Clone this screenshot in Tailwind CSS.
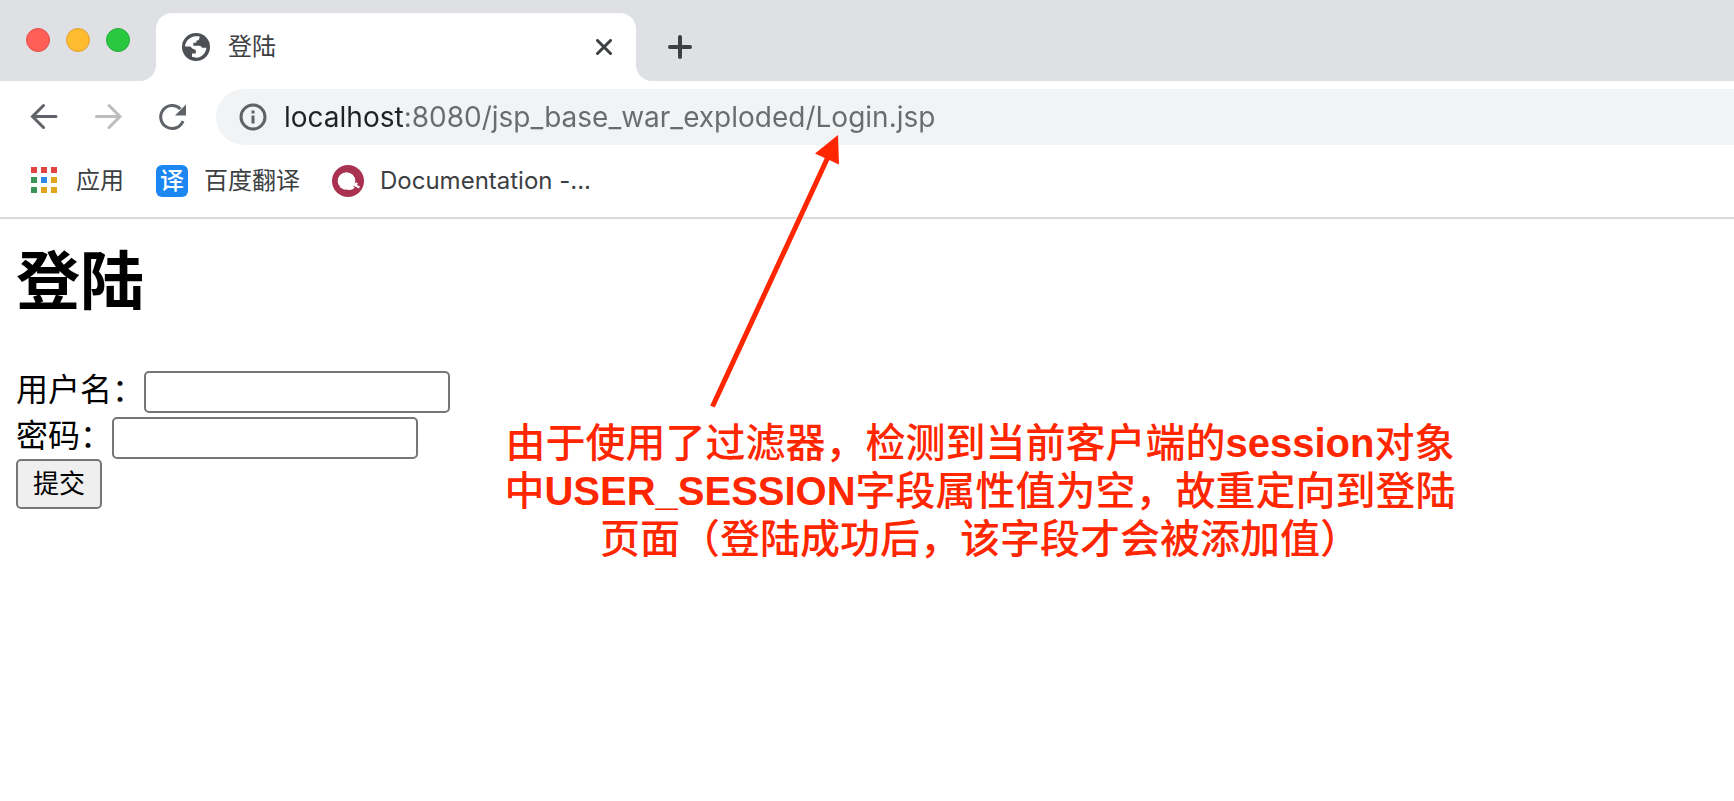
<!DOCTYPE html>
<html lang="zh-CN">
<head>
    <meta charset="UTF-8">
    <meta name="viewport" content="width=device-width, initial-scale=1.0">
    <title>登陆</title>
    <script src="https://cdn.jsdelivr.net/npm/@tailwindcss/browser@4"></script>
</head>
<body class="relative min-h-screen bg-white font-['Inter','Noto_Sans_CJK_SC',sans-serif]">

<!-- Tab strip -->
<header class="flex h-[81px]">
    <div class="flex shrink-0 items-start gap-4 w-[156px] pl-[26px] pt-7 bg-[#dee0e4] rounded-br-2xl">
        <button aria-label="关闭窗口" class="size-6 rounded-full bg-[#ff5f57] border border-[#e2504a]"></button>
        <button aria-label="最小化" class="size-6 rounded-full bg-[#febc2e] border border-[#dfa032]"></button>
        <button aria-label="全屏" class="size-6 rounded-full bg-[#28c840] border border-[#24ac38]"></button>
    </div>
    <div class="shrink-0 w-[480px] pt-[13px] bg-[#dee0e4]">
        <div class="flex items-center h-[68px] px-6 bg-white rounded-t-2xl">
            <svg class="size-8 shrink-0" viewBox="0 0 32 32">
                <circle cx="16" cy="16" r="14" fill="#4d5155"/>
                <path d="M5 15.500C5.500 10 9.500 6 15 5.200h4.500v1.300c0 2-1.300 3.300-3.200 3.300v2h-3v2.900h6c1.500 0 2.200.8 2.700 2h4.500c-.5 5-4.500 9.500-10 10l-4.500-.9v-3.300h3.800v-3.500l-3.500-1.500-2-2z" fill="#fff"/>
            </svg>
            <span class="ml-4 text-2xl text-[#3c4043]">登陆</span>
            <button aria-label="关闭标签页" class="ml-auto">
                <svg class="size-4" viewBox="0 0 16 16" stroke="#3c4043" stroke-width="3" stroke-linecap="round"><path d="M1.500 1.500 14.500 14.500M14.500 1.500 1.500 14.500"/></svg>
            </button>
        </div>
    </div>
    <div class="flex-1 flex items-center pt-[13px] pl-8 bg-[#dee0e4] rounded-bl-2xl">
        <button aria-label="新标签页">
            <svg class="size-6" viewBox="0 0 24 24" stroke="#3c4043" stroke-width="4" stroke-linecap="round"><path d="M12 2v20M2 12h20"/></svg>
        </button>
    </div>
</header>

<!-- Toolbar -->
<nav class="flex items-center pt-2 pl-7">
    <button aria-label="后退" class="mr-8">
        <svg class="size-8" viewBox="0 0 32 32" fill="none" stroke="#5f6368" stroke-width="3" stroke-linecap="round"><path d="M28 15.500H4.500M15.500 4.500 4.500 15.500l11 11"/></svg>
    </button>
    <button aria-label="前进" class="mr-8" disabled>
        <svg class="size-8" viewBox="0 0 32 32" fill="none" stroke="#bbbcbe" stroke-width="3" stroke-linecap="round"><path d="M4.500 15.500H28M17 4.500l11 11-11 11"/></svg>
    </button>
    <button aria-label="重新加载" class="mr-7">
        <svg class="size-8" viewBox="0 0 32 32" fill="none"><path d="M27 20A11.500 11.500 0 1 1 24.500 8" stroke="#5f6368" stroke-width="3"/><path d="M30 3.500v11H19z" fill="#5f6368"/></svg>
    </button>
    <div class="flex-1 flex items-center h-14 pl-[23px] bg-[#f1f3f5] rounded-l-full">
        <svg class="size-7 shrink-0" viewBox="0 0 28 28" fill="none" stroke="#5f6368" stroke-width="3"><circle cx="14" cy="14" r="12"/><path d="M14 12.500v8M14 7.500v3"/></svg>
        <input type="text" aria-label="地址" value="localhost:8080/jsp_base_war_exploded/Login.jsp" class="flex-1 ml-[17px] text-[28px] leading-10 text-transparent bg-clip-text bg-[linear-gradient(to_right,#202124_121px,#696b6f_121px)] outline-none">
    </div>
</nav>

<!-- Bookmarks -->
<nav class="flex items-center h-[74px] pl-7 text-2xl text-[#3c4043] border-b-2 border-[#d9dadc]">
    <a href="#" class="flex items-center mr-8">
        <svg class="size-8 mr-4" viewBox="0 0 32 32">
            <path d="M3 2h6v6H3zM13 2h6v6h-6zM23 2h6v6h-6z" fill="#e04440"/>
            <path d="M3 12h6v6H3zM3 22h6v6H3z" fill="#3a9557"/>
            <path d="M13 12h6v6h-6z" fill="#2f86e4"/>
            <path d="M23 12h6v6h-6zM13 22h6v6h-6zM23 22h6v6h-6z" fill="#e2a51c"/>
        </svg>
        应用
    </a>
    <a href="#" class="flex items-center mr-8">
        <span class="flex items-center justify-center size-8 mr-4 rounded-md bg-[#1c87f2] text-white font-medium">译</span>
        百度翻译
    </a>
    <a href="#" class="flex items-center">
        <svg class="size-8 mr-4" viewBox="0 0 32 32">
            <circle cx="16" cy="16" r="16" fill="#a83250"/>
            <circle cx="14.500" cy="16" r="8.800" fill="#fff"/>
            <path d="M16 24c3 .3 4.500-.3 6-2" stroke="#fff" stroke-width="2" fill="none"/>
            <path d="M21.500 20.500 25 18l-1.500 2.500 4 2" stroke="#fff" stroke-width="2" fill="none"/>
        </svg>
        Documentation -...
    </a>
</nav>

<main class="px-4 pt-[15px] text-black">
    <h1 class="mb-11 text-[64px] leading-[93px] font-bold">登陆</h1>
    <form class="text-[32px] leading-[38px]">
        <div class="flex items-center mb-1">
            <label for="username" class="pb-1">用户名：</label>
            <input id="username" name="username" type="text" class="w-[306px] h-[42px] px-1 border-2 border-[#767676] rounded-[5px] bg-white">
        </div>
        <div class="flex items-center">
            <label for="password" class="pb-1">密码：</label>
            <input id="password" name="password" type="password" class="w-[306px] h-[42px] px-1 border-2 border-[#767676] rounded-[5px] bg-white">
        </div>
        <button type="submit" class="block w-[86px] h-[50px] border-2 border-[#767676] rounded-[5px] bg-[#efefef] text-[26px] leading-10">提交</button>
    </form>
</main>

<!-- Red note and arrow drawn over the page -->
<svg class="absolute left-[700px] top-[130px] w-[150px] h-[280px] pointer-events-none" viewBox="0 0 150 280">
    <path d="M12.500 276.500 128 27" stroke="#ff2600" stroke-width="5"/>
    <path d="M138 5 115 23.500 139 34.500z" fill="#ff2600"/>
</svg>
<p class="absolute left-[480px] top-[419px] w-[1000px] text-center text-[40px] leading-12 font-medium text-[#ff2600] font-['Liberation_Sans','Noto_Sans_CJK_SC',sans-serif]">
    由于使用了过滤器，检测到当前客户端的<b class="font-bold">session</b>对象<br>
    中<b class="font-bold">USER_SESSION</b>字段属性值为空，故重定向到登陆<br>
    页面（登陆成功后，该字段才会被添加值）
</p>

</body>
</html>
